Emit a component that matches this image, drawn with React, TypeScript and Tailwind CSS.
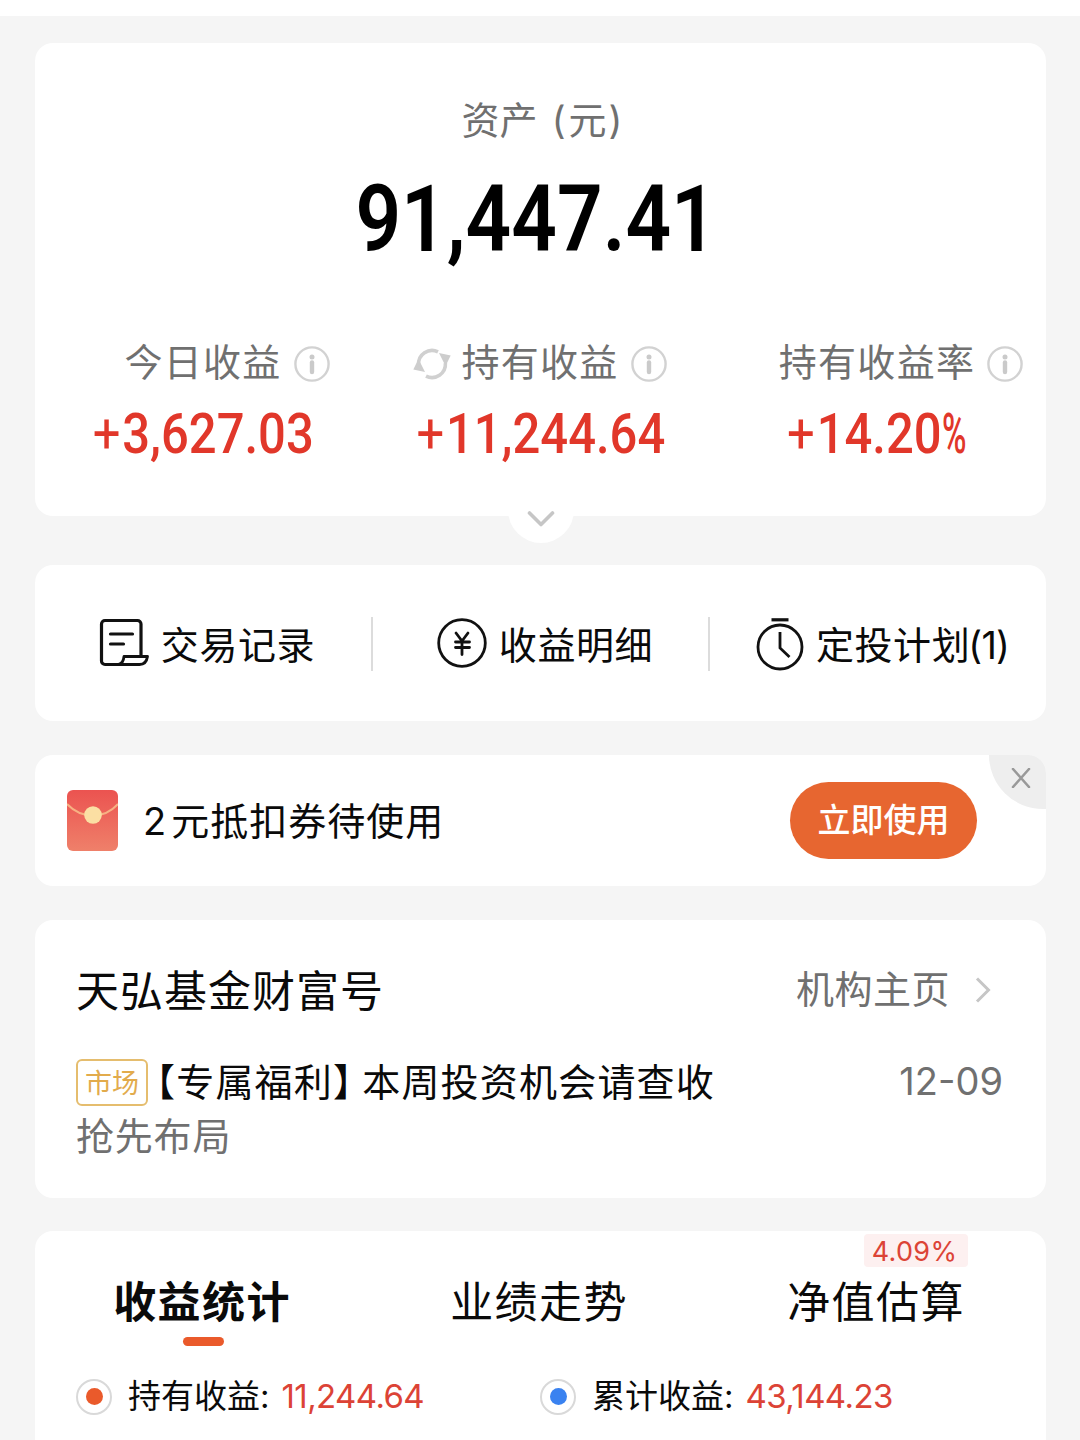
import type { ReactNode } from 'react'
import { clsx } from 'clsx'

interface StatItem {
  label: string
  amount: string
  unit?: string
  refreshable?: boolean
}

const STATS: StatItem[] = [
  { label: '今日收益', amount: '3,627.03' },
  { label: '持有收益', amount: '11,244.64', refreshable: true },
  { label: '持有收益率', amount: '14.20', unit: '%' },
]

const TABS = [
  { name: '收益统计', badge: '' },
  { name: '业绩走势', badge: '' },
  { name: '净值估算', badge: '4.09%' },
]

function InfoIcon() {
  return (
    <svg viewBox="0 0 36 36" className="h-9 w-9" fill="none">
      <circle cx="18" cy="18" r="16.6" stroke="#d2d2d2" strokeWidth="2.4" />
      <circle cx="18" cy="11" r="2.5" fill="#cacaca" />
      <path d="M18 16.5v9.500" stroke="#cacaca" strokeWidth="4.4" strokeLinecap="round" />
    </svg>
  )
}

function RefreshIcon() {
  return (
    <svg viewBox="0 0 38 36" className="h-9 w-[38px]" fill="none">
      <path d="M5.600 19A13.500 13.500 0 0 1 25 5.900" stroke="#d0d0d0" strokeWidth="3.6" />
      <path d="M32.400 17A13.500 13.500 0 0 1 13 30.100" stroke="#d0d0d0" strokeWidth="3.6" />
      <path d="M0.300 23.500 5.500 13l6.500 13z" fill="#cdcdcd" />
      <path d="M37.700 9.500 32.500 20 26 7z" fill="#cdcdcd" />
    </svg>
  )
}

function RecordIcon() {
  return (
    <svg viewBox="0 0 51 50" className="h-[50px] w-[51px]" fill="none" stroke="#111" strokeWidth="3.2" strokeLinejoin="round" strokeLinecap="round">
      <path d="M43 37V6a3.500 3.500 0 0 0-3.500-3.500H7A3.500 3.500 0 0 0 3.500 6v37A3.500 3.500 0 0 0 7 46.500h15" />
      <path d="M12.500 16h22M12.500 26h13" />
      <path d="M26 38.500h23.500c-.8 5.300-3.200 8-8 8H20.500c3.600-.6 5-3.500 5.500-8z" strokeWidth="2.8" />
    </svg>
  )
}

function YuanIcon() {
  return (
    <svg viewBox="0 0 50 50" className="h-[50px] w-[50px]" fill="none" stroke="#111" strokeWidth="2.8" strokeLinecap="round">
      <circle cx="25" cy="25" r="23.300" />
      <path d="M19 15 25 23l6-8M25 23v13.500M18.500 24h14M18.500 29.500h14" />
    </svg>
  )
}

function TimerIcon() {
  return (
    <svg viewBox="0 0 48 56" className="h-14 w-12" fill="none" stroke="#111" strokeWidth="2.8">
      <circle cx="24" cy="32" r="22" />
      <path d="M15.500 4.800h17" strokeWidth="3.2" />
      <path d="M24 17v16l9.500 9" />
    </svg>
  )
}

function RedPacket() {
  return (
    <svg viewBox="0 0 51 61" className="h-[61px] w-[51px] shrink-0">
      <defs>
        <linearGradient id="packet" x1="0" y1="0" x2="0" y2="1">
          <stop offset="0" stopColor="#eb5350" />
          <stop offset="1" stopColor="#ef806a" />
        </linearGradient>
      </defs>
      <rect width="51" height="61" rx="6" fill="url(#packet)" />
      <path d="M0 14c8 8.500 17 11.500 26 11.500S43 23 51 14" fill="none" stroke="#f7b183" strokeWidth="2" />
      <circle cx="26" cy="25" r="8.800" fill="#fbdfa3" />
    </svg>
  )
}

function Card({ className, children }: { className?: string; children: ReactNode }) {
  return <section className={clsx('relative rounded-[18px] bg-white', className)}>{children}</section>
}

function AssetCard() {
  return (
    <Card className="h-[473px] pt-[52px]">
      <div className="flex h-[50px] items-center justify-center pl-[3px] text-[38px] leading-[50px] text-[#707070]">
        <span>资产</span>
        <span className="ml-[14px] mr-[3px]">(</span>
        <span>元</span>
        <span className="ml-[2px]">)</span>
      </div>
      <div className="mt-[25px] flex h-[100px] items-center justify-center">
        <span className="-translate-x-[4px] scale-x-[0.86] font-[Roboto] text-[93px] font-semibold leading-[100px] text-black">
          91,447.41
        </span>
      </div>

      <div className="mt-[67px] grid grid-cols-3">
        {STATS.map((stat) => (
          <div key={stat.label} className="flex flex-col items-center">
            <div className="flex h-[50px] items-center">
              <span className="mr-[10px] w-[38px] pt-1">{stat.refreshable && <RefreshIcon />}</span>
              <span className="whitespace-nowrap text-[38px] leading-[50px] tracking-[1.3px] text-[#707070]">{stat.label}</span>
              <span className="ml-[12px] mr-px w-9 pt-[3px]">
                <InfoIcon />
              </span>
            </div>
            <span className="mt-[17px] flex scale-x-[0.89] font-[Roboto] text-[55px] font-medium leading-[60px] text-[#e1372a]">
              <span className="mr-0.5 font-normal">+</span>
              {stat.amount}
              {stat.unit && <span className="-mr-[12px] origin-left scale-x-[0.68] font-medium">{stat.unit}</span>}
            </span>
          </div>
        ))}
      </div>

      {/* Expand handle */}
      <div className="absolute left-1/2 top-[434px] flex h-[66px] w-[66px] -translate-x-1/2 items-center justify-center rounded-full bg-white">
        <svg viewBox="0 0 28 16" className="mt-[18px] h-4 w-7" fill="none" stroke="#c6c6c6" strokeWidth="3.6" strokeLinecap="round" strokeLinejoin="round">
          <path d="m2.500 2 11.500 11.500L25.500 2" />
        </svg>
      </div>
    </Card>
  )
}

function ActionItem({ icon, text, count, className }: { icon: ReactNode; text: string; count?: number; className?: string }) {
  return (
    <div className={clsx('flex items-center justify-center gap-3 whitespace-nowrap text-[38px] leading-[50px] tracking-[0.6px] text-[#0a0a0a]', className)}>
      {icon}
      <span className="pt-[3px]">
        {text}
        {count && <span className="-ml-0.5 tracking-[-0.8px]">({count})</span>}
      </span>
    </div>
  )
}

function ActionCard() {
  return (
    <Card className="mt-[49px] flex h-[156px] items-center">
      <ActionItem icon={<RecordIcon />} text="交易记录" className="w-[336px] pl-[7px]" />
      <div className="mt-px h-[54px] w-0.5 bg-[#dcdcdc]" />
      <ActionItem icon={<YuanIcon />} text="收益明细" className="w-[335px] pl-[9px]" />
      <div className="mt-px h-[54px] w-0.5 bg-[#dcdcdc]" />
      <ActionItem icon={<TimerIcon />} text="定投计划" count={1} className="w-[336px] pl-[9px]" />
    </Card>
  )
}

function CouponCard() {
  return (
    <Card className="mt-[34px] flex h-[131px] items-center overflow-hidden pl-8 pr-[69px]">
      <RedPacket />
      <span className="ml-[25px] flex-1 text-[38px] leading-[50px] tracking-[1px] text-[#0a0a0a]">
        <span className="mr-[4px]">2</span>元抵扣券待使用
      </span>
      <button className="h-[77px] w-[187px] rounded-full bg-[#e76630] pt-px text-[33px] font-medium text-white">立即使用</button>
      <button className="absolute right-0 top-0 h-[54px] w-[57px] rounded-bl-[54px] bg-[#eeeeee]">
        <svg viewBox="0 0 20 20" className="-mt-[8px] ml-[22px] h-5 w-5" fill="none" stroke="#999" strokeWidth="2.6" strokeLinecap="round">
          <path d="m2 1 16 18M18 1 2 19" />
        </svg>
      </button>
    </Card>
  )
}

function AgencyCard() {
  return (
    <Card className="mt-[34px] h-[278px] pl-[41px] pr-[43px] pt-[40px]">
      <div className="flex h-[60px] items-center justify-between">
        <h2 className="pt-px text-[43px] leading-[60px] tracking-[1px] text-[#0a0a0a]">天弘基金财富号</h2>
        <div className="flex items-center pr-[12px] text-[38px] leading-[60px] tracking-[0.5px] text-[#707070]">
          <span className="-mt-[3px]">机构主页</span>
          <svg viewBox="0 0 16 28" className="ml-[25px] h-7 w-4" fill="none" stroke="#c6c6c6" strokeWidth="3">
            <path d="m2 2.500 11.500 11.500L2 25.500" />
          </svg>
        </div>
      </div>
      <div className="mt-[36px] flex h-[52px] items-center">
        <span className="flex h-[47px] w-[72px] shrink-0 items-center justify-center rounded-md border-2 border-[#e5bd6e] pt-[4px] text-[27px] text-[#e2ab4c]">
          市场
        </span>
        <span className="-ml-[11px] whitespace-nowrap text-[38px] leading-[52px] tracking-[1.200px] text-[#0a0a0a]">
          【专属福利】<span className="-ml-[10px]">本周投资机会请查收</span>
        </span>
        <span className="-mt-0.5 ml-auto text-[38px] leading-[52px] text-[#707070]">12-09</span>
      </div>
      <p className="mt-px text-[38px] leading-[54px] tracking-[0.800px] text-[#707070]">抢先布局</p>
    </Card>
  )
}

function LegendItem({ label, value, dotClass }: { label: string; value: string; dotClass: string }) {
  return (
    <div className="flex w-[464px] items-center whitespace-nowrap text-[33px] leading-[48px]">
      <span className="mt-px flex h-9 w-9 items-center justify-center rounded-full border-2 border-[#d9d9d9]">
        <span className={clsx('h-[17px] w-[17px] rounded-full', dotClass)} />
      </span>
      <span className="ml-4 text-[#0a0a0a]">{label}:</span>
      <span className="-mt-px ml-[12px] tracking-[-0.6px] text-[#dc4336]">{value}</span>
    </div>
  )
}

function StatisticsCard() {
  return (
    <Card className="mt-[33px] h-[260px] pt-[41px]">
      <div className="grid grid-cols-3">
        {TABS.map((tab, i) => (
          <div key={tab.name} className="relative flex flex-col items-center">
            {tab.badge && (
              <span className="absolute -top-[38px] left-[155px] flex h-[33px] w-[104px] items-center justify-center rounded bg-[#fdf0f0] pr-[3px] pt-[3px] text-[27px] tracking-[0.300px] text-[#dc4336]">
                {tab.badge}
              </span>
            )}
            <span className={clsx('pr-[3px] text-[43px] leading-[60px] tracking-[1.400px] text-[#0a0a0a]', i === 0 && 'font-bold')}>
              {tab.name}
            </span>
            {i === 0 && <span className="mt-[5px] h-[9px] w-[41px] rounded-full bg-[#ea5a2b]" />}
          </div>
        ))}
      </div>
      <div className="mt-[26px] flex pl-[41px]">
        <LegendItem label="持有收益" value="11,244.64" dotClass="bg-[#ea5a2b]" />
        <LegendItem label="累计收益" value="43,144.23" dotClass="bg-[#3a82f0]" />
      </div>
    </Card>
  )
}

export default function App() {
  return (
    <div className="h-[1440px] w-[1080px] overflow-hidden bg-[#f5f5f5] font-[Inter,'Noto_Sans_CJK_SC',sans-serif]">
      <div className="h-4 bg-white" />
      <main className="pl-[35px] pr-[34px] pt-[27px]">
        <AssetCard />
        <ActionCard />
        <CouponCard />
        <AgencyCard />
        <StatisticsCard />
      </main>
    </div>
  )
}
